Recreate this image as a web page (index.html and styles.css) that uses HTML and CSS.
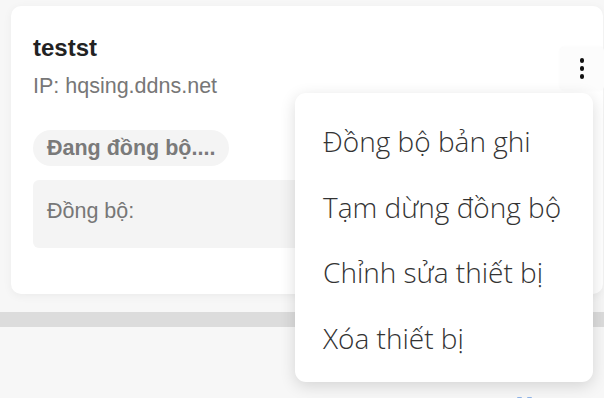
FILE: index.html
```html
<!DOCTYPE html>
<html lang="vi">
<head>
  <meta charset="UTF-8">
  <title>Thiết bị</title>
  <link rel="stylesheet" href="styles.css">
</head>
<body>

<div class="card">
  <div class="title">testst</div>
  <div class="ip">IP: hqsing.ddns.net</div>
  <span class="status">Đang đồng bộ....</span>
  <div class="sync-box">Đồng bộ:</div>

  <button class="more" type="button" aria-label="Tùy chọn">
    <span></span><span></span><span></span>
  </button>
</div>

<div class="divider"></div>

<div class="footer">
  <svg class="footer-icon" width="16" height="6" viewBox="0 0 16 6">
    <rect x="0" y="0" width="5" height="6" rx="1" fill="#8fb4e8"/>
    <rect x="10" y="0" width="5" height="6" rx="1" fill="#8fb4e8"/>
  </svg>
</div>

<ul class="menu">
  <li>Đồng bộ bản ghi</li>
  <li>Tạm dừng đồng bộ</li>
  <li>Chỉnh sửa thiết bị</li>
  <li>Xóa thiết bị</li>
</ul>

</body>
</html>
```

FILE: styles.css
```css
body {
  margin: 0;
  padding-top: 6px;
  background: #f7f7f7;
  font-family: "Liberation Sans", Arial, sans-serif;
  overflow: hidden;
}

.card {
  position: relative;
  margin-left: 11px;
  margin-right: 1px;
  padding: 28px 22px 46px 22px;
  background: #fff;
  border-radius: 10px;
  box-shadow: 0 2px 10px rgba(0,0,0,0.05);
}

.title {
  font-size: 24px;
  line-height: 27.5px;
  font-weight: bold;
  color: #222;
}

.ip {
  margin-top: 12.5px;
  font-size: 21.5px;
  line-height: 24.7px;
  color: #777;
}

.status {
  display: inline-block;
  margin-top: 31px;
  padding: 6px 14px;
  font-size: 21.5px;
  line-height: 24.7px;
  font-weight: bold;
  color: #7a7a7a;
  background: #f4f4f4;
  border-radius: 20px;
}

.sync-box {
  margin-top: 14px;
  padding: 19px 14px 24px 14px;
  font-size: 21.5px;
  line-height: 24.7px;
  color: #777;
  background: #f4f4f4;
  border-radius: 6px;
}

.more {
  position: absolute;
  top: 41px;
  right: -1px;
  width: 44px;
  height: 43px;
  padding: 0;
  border: none;
  border-radius: 4px;
  background: #fcfcfc;
  box-shadow: 0 0 3px rgba(0,0,0,0.03);
  display: flex;
  flex-direction: column;
  align-items: center;
  justify-content: center;
  gap: 3.5px;
}

.more span {
  width: 4.5px;
  height: 4.5px;
  border-radius: 50%;
  background: #111;
}

.divider {
  margin-top: 18px;
  height: 15px;
  background: #dcdcdc;
}

.footer {
  padding: 70px 0 0 517px;
  height: 10px;
}

.footer-icon {
  display: block;
}

.menu {
  position: absolute;
  left: 295px;
  top: 93px;
  width: 298px;
  height: 289px;
  box-sizing: border-box;
  margin: 0;
  padding: 16px 0 11px 0;
  list-style: none;
  background: #fff;
  border-radius: 11px;
  box-shadow: 0 4px 16px rgba(0,0,0,0.14);
  font-family: "Open Sans", "Noto Sans", sans-serif;
  font-size: 28px;
  font-weight: 350;
  color: #333;
}

.menu li {
  height: 65.5px;
  line-height: 65.5px;
  padding-left: 28px;
  white-space: nowrap;
}
```
